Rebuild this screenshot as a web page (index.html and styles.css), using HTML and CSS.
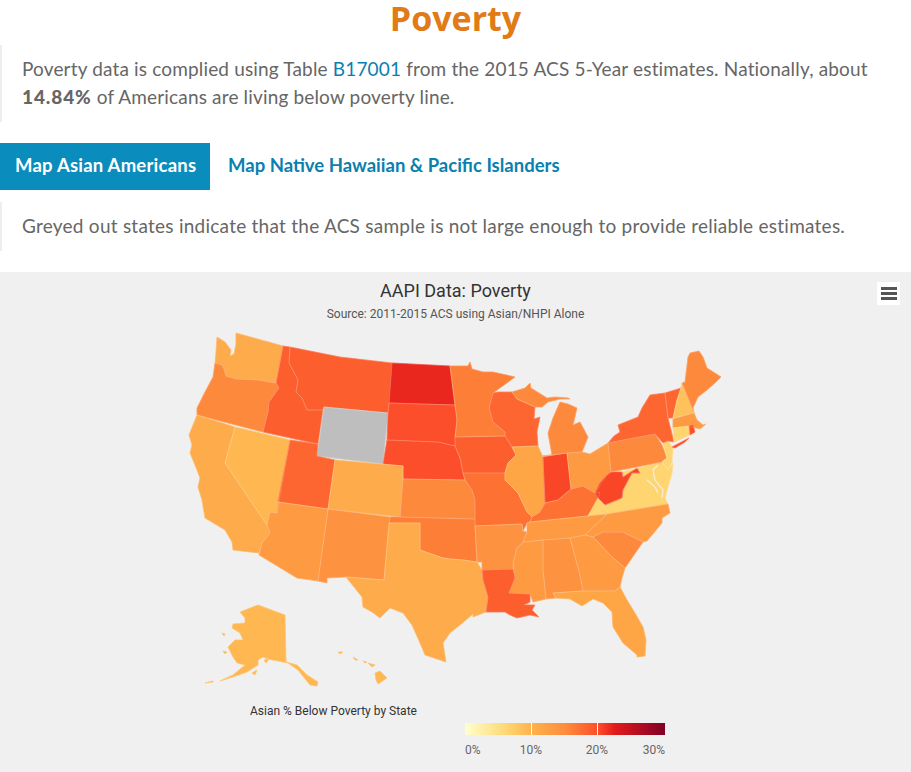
FILE: index.html
```html
<!DOCTYPE html>
<html lang="en">
<head>
<meta charset="utf-8">
<title>Poverty</title>
<link rel="stylesheet" href="styles.css">
</head>
<body>
<h1 class="title">Poverty</h1>
<blockquote class="note note-intro">Poverty data is complied using Table <a href="#">B17001</a> from the 2015 ACS 5-Year estimates. Nationally, about <strong>14.84%</strong> of Americans are living below poverty line.</blockquote>
<nav class="tabs">
  <a class="tab tab-active" href="#">Map Asian Americans</a>
  <a class="tab" href="#">Map Native Hawaiian &amp; Pacific Islanders</a>
</nav>
<blockquote class="note note-grey">Greyed out states indicate that the ACS sample is not large enough to provide reliable estimates.</blockquote>
<section class="chart">
  <h2 class="chart-title">AAPI Data: Poverty</h2>
  <p class="chart-sub">Source: 2011-2015 ACS using Asian/NHPI Alone</p>
  <button class="menu" aria-label="Chart menu"><span></span><span></span><span></span></button>
  <svg class="map" viewBox="180 325 560 365" width="560" height="365" role="img" aria-label="US map of Asian poverty by state">
    <g id="states" class="states">
      <polygon class="t-b" points="236,333 283,346 276,383 258,380 237,379 226,376 224,369 222,365 215,363 216,352 217,337 225,342 231,350 230,356 234,354 236,344"/>
      <polygon class="t-f" points="215,363 222,365 224,369 226,376 237,379 258,380 276,383 279,388 269,402 268,412 263,432 197,415 197,408 205,392 213,377"/>
      <polygon class="t-b" points="197,415 235,427 225,463 267,525 270,533 262,543 259,553 233,550 232,542 225,530 205,518 202,500 198,487 200,478 197,470 190,453 192,445 189,435"/>
      <polygon class="t-a" points="235,427 290,440 277,513 270,512 267,525 225,463"/>
      <polygon class="t-j" points="283,346 290,347 289,363 298,380 296,392 302,398 307,410 323,410 318,444 263,432 268,412 269,402 279,388 276,383"/>
      <polygon class="t-j" points="290,347 340,357 392,363 389,403 388,413 324,407 323,410 307,410 302,398 296,392 298,380 289,363"/>
      <polygon class="t-grey" points="324,407 388,413 383,464 317,456"/>
      <polygon class="t-m" points="392,363 450,366 455,405 389,403"/>
      <polygon class="t-k" points="389,403 455,405 457,420 455,437 455,446 447,444 438,442 387,440 388,413"/>
      <polygon class="t-k" points="387,440 438,442 455,446 460,458 463,473 465,480 403,479 403,466 383,464"/>
      <polygon class="t-i" points="290,440 318,444 317,456 335,460 328,509 278,502"/>
      <polygon class="t-b" points="335,460 403,466 403,479 400,517 328,509"/>
      <polygon class="t-d" points="278,502 328,509 318,581 297,578 259,555 262,543 270,533 267,525 270,512 277,513"/>
      <polygon class="t-e" points="328,509 390,517 384,580 346,577 327,578 327,583 318,581"/>
      <polygon class="t-f" points="403,479 465,480 472,490 475,500 475,519 400,517"/>
      <polygon class="t-g" points="390,517 400,517 475,519 475,526 477,562 463,560 450,559 443,558 420,550 420,523 389,523"/>
      <polygon class="t-b" points="389,523 420,523 420,550 443,558 450,559 463,560 477,562 482,570 483,580 488,597 486,612 473,617 473,614 460,625 450,633 443,643 446,662 425,655 420,643 412,625 403,613 390,608 380,618 372,612 363,607 362,597 346,577 384,580"/>
      <polygon class="t-h" points="463,473 505,473 505,480 518,493 527,512 532,517 530,522 527,523 523,531 522,524 475,526 475,500 472,490 465,480"/>
      <polygon class="t-j" points="455,437 505,436 512,447 516,455 508,463 505,473 463,473 460,458 455,446"/>
      <polygon class="t-g" points="450,366 468,366 470,362 472,369 483,372 493,372 515,377 493,393 489,408 493,422 505,432 505,436 455,437 457,420 455,405"/>
      <polygon class="t-i" points="493,393 498,392 512,392 517,399 535,407 534,419 540,417 537,432 538,446 512,447 505,436 505,432 493,422 489,408"/>
      <polygon class="t-c" points="512,447 538,446 543,457 545,503 540,512 532,517 527,512 518,493 505,480 505,473 508,463 516,455"/>
      <polygon class="t-l" points="543,457 567,453 571,489 558,500 545,503"/>
      <polygon class="t-d" points="567,453 582,452 590,454 608,443 611,472 607,475 595,493 583,486 571,489"/>
      <polygon class="t-f" points="543,456 552,455 548,433 553,418 560,402 568,404 577,408 573,425 580,422 588,437 582,452 567,453"/>
      <polygon class="t-f" points="512,392 525,388 530,383 531,388 547,398 555,397 568,398 570,399 560,399 548,402 542,407 535,407 517,399"/>
      <polygon class="t-h" points="532,517 540,512 545,503 558,500 571,489 583,486 595,493 600,492 598,498 605,505 588,516 530,522"/>
      <polygon class="t-o" points="588,516 598,498 605,505 622,498 623,490 632,473 640,473 637,468 623,477 622,472 662,462 668,470 673,463 672,473 668,487 665,498 668,504 607,514"/>
      <polygon class="t-l" points="595,493 600,483 607,475 611,472 622,472 623,477 637,468 640,473 632,473 623,490 622,498 605,505 598,498"/>
      <polygon class="t-f" points="608,443 655,434 662,445 667,458 662,462 611,472"/>
      <polygon class="t-o" points="663,443 668,441 673,448 672,462 668,470 662,462 667,458"/>
      <polygon class="t-i" points="608,443 614,436 620,432 618,425 638,417 642,408 650,395 665,393 668,418 674,442 668,441 663,443 655,434"/>
      <polygon class="t-k" points="672,447 689,438 685,442 675,448"/>
      <polygon class="t-i" points="665,393 681,388 677,400 673,418 668,418"/>
      <polygon class="t-n" points="682,383 694,413 673,418 677,400 681,388"/>
      <polygon class="t-f" points="682,383 685,382 688,357 690,353 699,351 703,357 707,368 715,373 721,377 715,383 707,390 698,397 693,408 694,413"/>
      <polygon class="t-d" points="673,419 694,413 697,420 703,425 706,424 700,429 692,427 673,428"/>
      <polygon class="t-o" points="673,428 689,426 690,435 674,442"/>
      <polygon class="t-k" points="689,426 693,425 695,432 690,435"/>
      <polygon class="t-d" points="530,522 588,516 607,514 585,535 570,538 543,540 523,542 527,532 527,523"/>
      <polygon class="t-d" points="607,514 668,504 670,513 662,518 662,523 647,541 643,542 623,532 603,532 593,537 585,535"/>
      <polygon class="t-f" points="593,537 603,532 623,532 643,542 625,568 612,557"/>
      <polygon class="t-d" points="570,538 585,535 593,537 612,557 625,568 622,578 620,587 615,591 583,591 580,575"/>
      <polygon class="t-e" points="543,540 570,538 580,575 583,591 553,593 556,598 546,599 543,570"/>
      <polygon class="t-d" points="523,542 543,540 543,570 546,599 533,602 530,594 509,593 515,578 513,563 517,548"/>
      <polygon class="t-e" points="475,526 522,524 523,531 527,532 523,542 517,548 513,563 513,569 482,570 482,562 477,562"/>
      <polygon class="t-j" points="482,570 513,569 515,578 509,593 530,594 530,602 524,605 535,605 532,610 539,617 530,615 517,618 510,615 505,612 486,612 488,597 483,580"/>
      <polygon class="t-c" points="553,593 583,591 615,591 620,587 627,600 635,613 643,627 646,640 645,656 637,657 637,655 623,643 613,627 612,612 603,603 593,599 582,606 570,599 556,598"/>
      <polygon class="t-a" points="240,612 258,605 285,615 286,662 297,665 307,675 318,682 317,686 310,685 298,670 288,663 273,660 268,659 263,657 258,660 258,665 247,672 233,677 220,681 233,675 245,665 237,663 233,657 228,647 235,640 243,640 240,633 232,628 233,624 245,623 245,618"/>
      <polygon class="t-a" points="252,673 257,670 255,675"/>
      <polygon class="t-a" points="205,683 213,681 213,682"/>
      <polygon class="t-a" points="264,660 269,659 266,663"/>
      <polygon class="t-a" points="222,633 225,634 224,636"/>
      <polygon class="t-a" points="223,651 227,652 225,654"/>
      <polygon class="t-a" points="375,673 380,671 387,678 378,684 376,680"/>
      <polygon class="t-a" points="368,663 375,665 372,667"/>
      <polygon class="t-a" points="363,661 367,662 365,663"/>
      <polygon class="t-a" points="353,657 358,660 355,660"/>
      <polygon class="t-a" points="338,652 343,652 340,654"/>
    </g>
    <use class="borders" href="#states"/>
    <g class="bays">
      <polyline points="658,465 653,470 655,480 663,490 662,498"/>
      <polyline points="647,480 655,487 658,493"/>
    </g>
  </svg>
  <p class="legend-title">Asian % Below Poverty by State</p>
  <div class="scale">
    <div class="scale-bar"><i></i><i></i></div>
    <div class="scale-labels"><span>0%</span><span>10%</span><span>20%</span><span>30%</span></div>
  </div>
</section>
</body>
</html>
```
FILE: styles.css
```css
html, body { margin: 0; padding: 0; height: 772px; overflow: hidden; background: #fff; }
body { font-family: "Lato", "Open Sans", sans-serif; color: #666; }
.title { margin: 0; height: 45px; text-align: center; font-family: "Open Sans", sans-serif; font-size: 34px; line-height: 36px; font-weight: 700; color: #e07b17; }
.note { margin: 0; border-left: 2px solid #eee; padding: 0 0 0 20px; font-size: 19px; line-height: 28px; }
.note-intro { height: 77px; padding-top: 10px; box-sizing: border-box; letter-spacing: .16px; }
.note-intro strong { font-weight: 900; letter-spacing: .9px; }
.note a { color: #0a7fb0; text-decoration: none; }
.note-grey { height: 49px; padding-top: 10px; box-sizing: border-box; margin-top: 12px; letter-spacing: .25px; }
.tabs { display: flex; margin-top: 21px; height: 47px; }
.tab { display: flex; align-items: center; padding: 0 15px 4px; font-size: 18.5px; font-weight: 700; color: #0a7fb0; text-decoration: none; }
.tab + .tab { padding-left: 18px; }
.tab-active { width: 210px; box-sizing: border-box; padding-right: 0; white-space: nowrap; background: #0a8cbd; color: #fff; letter-spacing: .22px; }
.chart { position: relative; margin-top: 21px; height: 500px; background: #f0f0f0; overflow: hidden; font-family: "Roboto", sans-serif; }
.chart-title { margin: 0; padding-top: 9px; text-align: center; font-size: 18px; line-height: 20px; font-weight: 400; color: #333; }
.chart-sub { margin: 6px 0 0; text-align: center; font-size: 12px; line-height: 14px; color: #555; }
.menu { position: absolute; top: 10px; left: 877px; width: 23px; height: 23px; padding: 0; border: 0; background: #fff; display: flex; flex-direction: column; align-items: center; justify-content: center; gap: 2.5px; }
.menu span { display: block; width: 16px; height: 2.5px; background: #555; }
.map { display: block; margin: 4px 0 0 180px; }
.states polygon { fill: var(--line-fill, var(--tone)); stroke: var(--line, var(--tone)); stroke-width: var(--line-width, .7); stroke-linejoin: round; }
.borders { --line-fill: none; --line: rgba(255, 255, 255, .28); --line-width: .5; }
.bays polyline { fill: none; stroke: #f6efe0; stroke-width: 1.2; }
.t-a { --tone: #feb751; }
.t-b { --tone: #feab4b; }
.t-c { --tone: #fea546; }
.t-d { --tone: #fd9a42; }
.t-e { --tone: #fd9340; }
.t-f { --tone: #fd8a3c; }
.t-g { --tone: #fd7e37; }
.t-h { --tone: #fd7232; }
.t-i { --tone: #fd6630; }
.t-j { --tone: #fc5e2e; }
.t-k { --tone: #fc4e2a; }
.t-l { --tone: #f94626; }
.t-m { --tone: #e9271f; }
.t-n { --tone: #fec25c; }
.t-o { --tone: #fed570; }
.t-grey { --tone: #bebebe; }
.legend-title { margin: 0 0 0 250px; position: absolute; top: 432px; font-size: 12px; line-height: 14px; color: #333; }
.scale { position: absolute; left: 465px; top: 451px; width: 200px; }
.scale-bar { position: relative; height: 12px; background: linear-gradient(90deg, #ffffcc 0%, #fed976 20%, #feb24c 33.3%, #fd8d3c 50%, #fc4e2a 66.6%, #e31a1c 75%, #800026 100%); }
.scale-bar i { position: absolute; top: 0; bottom: 0; width: 1px; background: #fff; }
.scale-bar i:first-child { left: 66px; }
.scale-bar i:last-child { left: 132px; }
.scale-labels { display: flex; margin-top: 9px; font-size: 12px; line-height: 13px; color: #666; }
.scale-labels span { width: 40px; text-align: center; }
.scale-labels span:first-child { width: 46px; text-align: left; }
.scale-labels span:nth-child(3) { margin-left: 26px; }
.scale-labels span:last-child { width: 48px; text-align: right; }
```
